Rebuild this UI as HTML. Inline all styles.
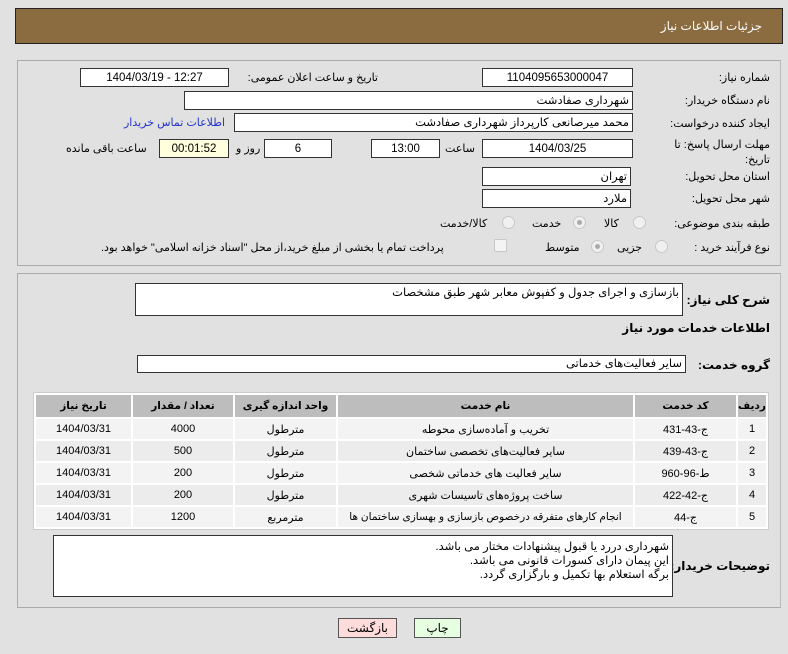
<!DOCTYPE html>
<html><head><meta charset="utf-8"><style>
*{margin:0;padding:0;box-sizing:border-box}
body{width:788px;height:654px;background:#e1e1e1;font-family:"Liberation Sans","DejaVu Sans",sans-serif;font-size:11px;color:#000;position:relative;overflow:hidden}
.a{position:absolute;white-space:nowrap}
.r{text-align:right;direction:rtl}
.box{position:absolute;background:#fff;border:1px solid #333;height:19px;line-height:18px;text-align:center;font-size:11.5px;white-space:nowrap;overflow:hidden}
.boxr{text-align:right;direction:rtl;padding-right:3px}
.panel{position:absolute;border:1px solid #aaa;border-right-color:#bbb}
.rad{position:absolute;width:13px;height:13px;border-radius:50%;border:1px solid #c8c8c8;background:#f0f0f0}
.rad.on::after{content:"";position:absolute;left:3px;top:3px;width:5px;height:5px;border-radius:50%;background:#aaa}
table{position:absolute;left:33px;top:392px;width:736px;border-collapse:separate;border-spacing:2px;background:#fff;border:1px solid #ccc;font-size:11px;table-layout:fixed}
th{background:#bdbdbd;height:22px;font-weight:bold;font-size:10.5px;white-space:nowrap;overflow:hidden}
td{background:#f3f3f3;height:20px;text-align:center;white-space:nowrap;overflow:hidden;padding:0}
tr:nth-child(odd) td{background:#ececec}
.b{font-weight:bold}
.L{right:18px}
</style></head><body>
<div class="a" style="left:15px;top:8px;width:768px;height:36px;background:#8b6b40;border:1px solid #222"></div>
<div class="a r" style="right:26px;top:19px;color:#fff;font-size:12px">جزئیات اطلاعات نیاز</div>

<div class="panel" style="left:17px;top:60px;width:764px;height:206px"></div>

<div class="a r L" style="top:71px">شماره نیاز:</div>
<div class="box" style="left:482px;top:68px;width:151px">1104095653000047</div>
<div class="a r" style="right:410px;top:71px">تاریخ و ساعت اعلان عمومی:</div>
<div class="box" style="left:80px;top:68px;width:149px">1404/03/19 - 12:27</div>

<div class="a r L" style="top:94px">نام دستگاه خریدار:</div>
<div class="box boxr" style="left:184px;top:91px;width:449px">شهرداری صفادشت</div>

<div class="a r L" style="top:117px">ایجاد کننده درخواست:</div>
<div class="box boxr" style="left:234px;top:113px;width:399px">محمد میرصانعی کارپرداز شهرداری صفادشت</div>
<div class="a r" style="left:124px;top:116px;color:#2233cc">اطلاعات تماس خریدار</div>

<div class="a r L" style="top:138px;line-height:15px">مهلت ارسال پاسخ: تا<br>تاریخ:</div>
<div class="box" style="left:482px;top:139px;width:151px">1404/03/25</div>
<div class="a r" style="left:445px;top:142px">ساعت</div>
<div class="box" style="left:371px;top:139px;width:69px">13:00</div>
<div class="box" style="left:264px;top:139px;width:68px">6</div>
<div class="a r" style="left:236px;top:142px">روز و</div>
<div class="box" style="left:159px;top:139px;width:70px;background:#ffffdd">00:01:52</div>
<div class="a r" style="left:66px;top:142px">ساعت باقی مانده</div>

<div class="a r L" style="top:170px">استان محل تحویل:</div>
<div class="box boxr" style="left:482px;top:167px;width:149px">تهران</div>
<div class="a r L" style="top:192px">شهر محل تحویل:</div>
<div class="box boxr" style="left:482px;top:189px;width:149px">ملارد</div>

<div class="a r L" style="top:217px">طبقه بندی موضوعی:</div>
<div class="rad" style="left:633px;top:216px"></div><div class="a r" style="left:604px;top:217px">کالا</div>
<div class="rad on" style="left:573px;top:216px"></div><div class="a r" style="left:532px;top:217px">خدمت</div>
<div class="rad" style="left:502px;top:216px"></div><div class="a r" style="left:440px;top:217px">کالا/خدمت</div>

<div class="a r L" style="top:241px">نوع فرآیند خرید :</div>
<div class="rad" style="left:655px;top:240px"></div><div class="a r" style="left:617px;top:241px">جزیی</div>
<div class="rad on" style="left:591px;top:240px"></div><div class="a r" style="left:545px;top:241px">متوسط</div>
<div class="a" style="left:494px;top:239px;width:13px;height:13px;border:1px solid #c8c8c8;background:#f4f4f4;border-radius:2px"></div>
<div class="a r" style="left:101px;top:241px">پرداخت تمام یا بخشی از مبلغ خرید،از محل "اسناد خزانه اسلامی" خواهد بود.</div>

<div class="panel" style="left:17px;top:273px;width:764px;height:335px"></div>

<div class="a r b" style="right:18px;top:293px;font-size:12px">شرح کلی نیاز:</div>
<div class="box boxr" style="left:135px;top:283px;width:548px;height:33px;text-align:right;line-height:18px">بازسازی و اجرای جدول و کفپوش معابر شهر طبق مشخصات</div>
<div class="a r b" style="right:18px;top:321px;font-size:12px">اطلاعات خدمات مورد نیاز</div>
<div class="a r b" style="right:18px;top:358px;font-size:12px">گروه خدمت:</div>
<div class="box boxr" style="left:137px;top:355px;width:549px;height:18px;line-height:17px">سایر فعالیت‌های خدماتی</div>

<table dir="rtl">
<colgroup><col style="width:28px"><col style="width:101px"><col style="width:295px"><col style="width:101px"><col style="width:100px"><col></colgroup>
<tr><th>ردیف</th><th>کد خدمت</th><th>نام خدمت</th><th>واحد اندازه گیری</th><th>تعداد / مقدار</th><th>تاریخ نیاز</th></tr>
<tr><td>1</td><td>ج-43-431</td><td>تخریب و آماده‌سازی محوطه</td><td>مترطول</td><td>4000</td><td>1404/03/31</td></tr>
<tr><td>2</td><td>ج-43-439</td><td>سایر فعالیت‌های تخصصی ساختمان</td><td>مترطول</td><td>500</td><td>1404/03/31</td></tr>
<tr><td>3</td><td>ط-96-960</td><td>سایر فعالیت های خدماتی شخصی</td><td>مترطول</td><td>200</td><td>1404/03/31</td></tr>
<tr><td>4</td><td>ج-42-422</td><td>ساخت پروژه‌های تاسیسات شهری</td><td>مترطول</td><td>200</td><td>1404/03/31</td></tr>
<tr><td>5</td><td>ج-44</td><td style="font-size:10.5px;letter-spacing:-0.2px">انجام کارهای متفرقه درخصوص بازسازی و بهسازی ساختمان ها</td><td>مترمربع</td><td>1200</td><td>1404/03/31</td></tr>
</table>

<div class="a r b" style="right:18px;top:559px;font-size:12px">توضیحات خریدار:</div>
<div class="box" style="left:53px;top:535px;width:620px;height:62px;text-align:right;direction:rtl;padding:4px 3px;line-height:14px;white-space:normal">شهرداری دررد یا قبول پیشنهادات مختار می باشد.<br>این پیمان دارای کسورات قانونی می باشد.<br>برگه استعلام بها تکمیل و بارگزاری گردد.</div>

<div class="a" style="left:338px;top:618px;width:59px;height:20px;background:#ffdcdc;border:1px solid #555;text-align:center;line-height:18px;font-size:12px">بازگشت</div>
<div class="a" style="left:414px;top:618px;width:47px;height:20px;background:#e6ffe0;border:1px solid #555;text-align:center;line-height:18px;font-size:12px">چاپ</div>
</body></html>
